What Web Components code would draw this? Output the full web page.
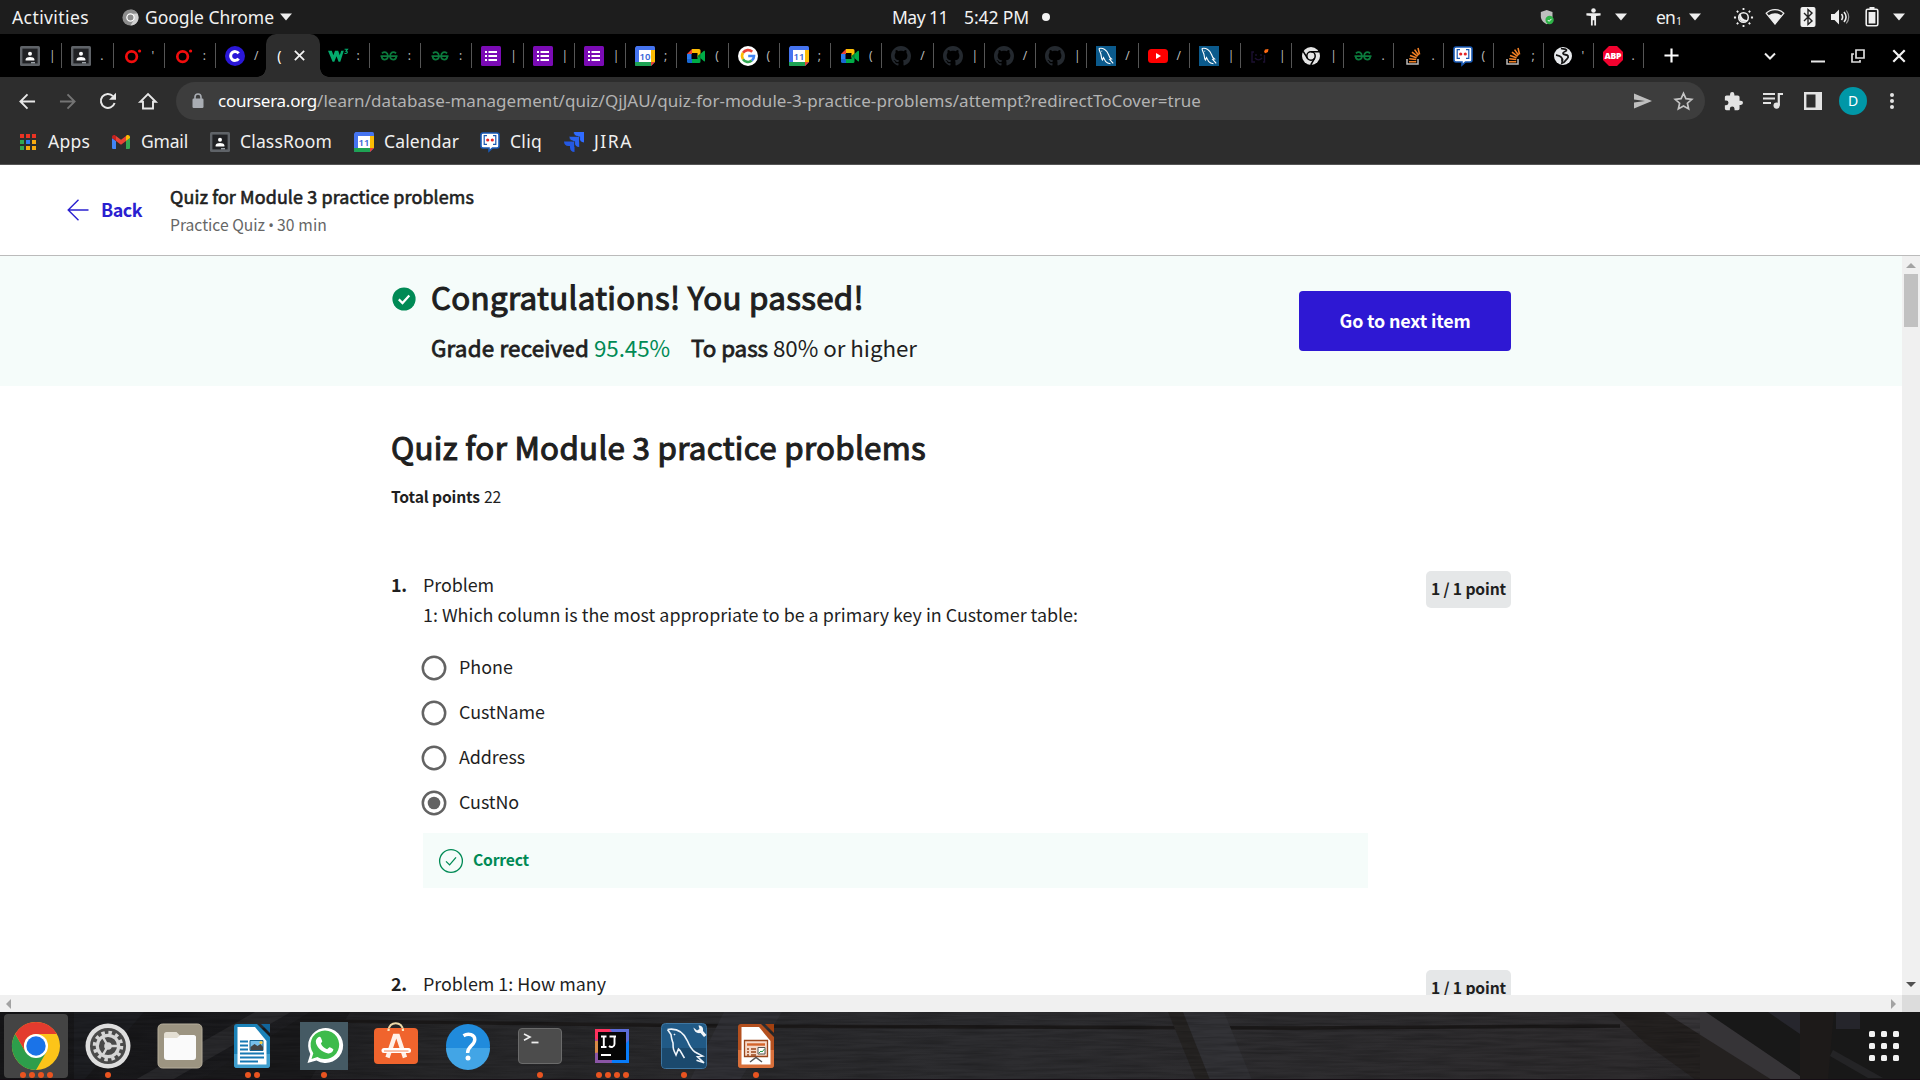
<!DOCTYPE html>
<html lang="en">
<head>
<meta charset="utf-8">
<title>Quiz for Module 3 practice problems</title>
<style>
html,body{margin:0;padding:0;width:1920px;height:1080px;overflow:hidden;background:#000}
</style>
</head>
<body>
<desktop-shell></desktop-shell>
<script>
const ICONS = {
  person:['0 0 20 20','<rect width="20" height="20" rx="1.5" fill="#5f6368"/><rect x="2.4" y="2.6" width="15.2" height="14.8" fill="#202124"/><circle cx="10" cy="7.8" r="2" fill="#fff"/><path d="M5.6 14.4v-1c0-1.6 2.4-2.4 4.4-2.4s4.4.8 4.4 2.4v1z" fill="#fff"/><path d="M11 16h4v1.4h-4z" fill="#9aa0a6"/>'],
  odot:['0 0 20 20','<circle cx="8.6" cy="10.600" r="5.300" fill="none" stroke="#f20d0d" stroke-width="2.700"/><circle cx="16.600" cy="5" r="1.600" fill="#f20d0d"/>'],
  coursera:['0 0 20 20','<circle cx="10" cy="10" r="10" fill="#2a17d8"/><path d="M13.6 7.4A4.4 4.4 0 1 0 13.6 12.6" fill="none" stroke="#fff" stroke-width="3"/>'],
  w3:['0 0 20 20','<path d="M0 4.800h3.800l1.600 4.500L7 4.800h3.200l1.600 4.500 1.400-4.500h2.600L12.300 15.800h-1.700L8.500 10.300 6.300 15.800H4.600z" fill="#04aa6d"/><path d="M16.600 3.200h2.900l-1.500 1.900c2.100 0 1.900 3-1.500 2.300" fill="none" stroke="#04aa6d" stroke-width="1.100"/>'],
  gfg:['0 0 20 20','<path d="M1.500 10.200h17M2.900 7.300C5.500 5 8.900 6.200 8.900 10.200c0 4.200-5.900 4.700-6.300.2M17.100 7.300C14.500 5 11.100 6.200 11.100 10.200c0 4.200 5.900 4.700 6.300.2" fill="none" stroke="#0b7a3c" stroke-width="1.700"/>'],
  forms:['0 0 20 20','<rect width="20" height="20" rx="1.500" fill="#7b0bb5"/><path d="M4 5h2v2H4zM4 9h2v2H4zM4 13h2v2H4zM7.500 5H16v2H7.500zM7.500 9H16v2H7.500zM7.500 13H16v2H7.500z" fill="#fff"/>'],
  cal10:['0 0 20 20','<path d="M1.500 0h17A1.500 1.500 0 0 1 20 1.500V16l-4 4H1.500A1.500 1.500 0 0 1 0 18.500v-17z" fill="#4574f0"/><path d="M16 4h4v12h-4z" fill="#fbbc04"/><path d="M0 16h16v4H1.500A1.500 1.500 0 0 1 0 18.500z" fill="#1ea354"/><path d="M16 16h4l-4 4z" fill="#ea4335"/><path d="M4 4h12v12H4z" fill="#fff"/><text x="10" y="13.500" text-anchor="middle" font-family="Noto Sans" font-weight="600" font-size="9.500" fill="#3a67d8">10</text>'],
  meet:['0 0 20 20','<path d="M6 3L1 8h5z" fill="#ea4335"/><path d="M1 8h4.500v5H1z" fill="#2a7bf0"/><path d="M1 13h5v4H2.500A1.500 1.500 0 0 1 1 15.500z" fill="#1967d2"/><path d="M6 3h7a1.500 1.500 0 0 1 1.500 1.500V10l-3 1.500V7H6z" fill="#fbbc04"/><path d="M6 13h5.500v-2.500l3-2V15.500A1.500 1.500 0 0 1 13 17H6z" fill="#00ac47"/><path d="M14 8.200l4-3.400c.5-.4 1 0 1 .4v9.600c0 .5-.5.8-1 .4l-4-3.400z" fill="#00ac47"/><path d="M11.500 10L14.500 7.500v5z" fill="#00832d"/>'],
  google:['0 0 20 20','<circle cx="10" cy="10" r="10" fill="#fff"/><g fill="none" stroke-width="2.600"><path d="M5 6.800A6 6 0 0 1 14.200 5.800" stroke="#ea4335"/><path d="M5 13.200A6 6 0 0 1 5 6.800" stroke="#fbbc05"/><path d="M13.800 14.600A6 6 0 0 1 5 13.200" stroke="#34a853"/><path d="M10.200 10h5.800a6 6 0 0 1-2.200 4.600" stroke="#4285f4"/></g>'],
  github:['0 0 16 16','<path fill="#24292f" d="M8 0C3.580 0 0 3.580 0 8c0 3.540 2.290 6.530 5.470 7.590.4.070.55-.17.55-.38 0-.19-.01-.82-.01-1.490-2.010.37-2.530-.49-2.690-.94-.09-.23-.48-.94-.82-1.130-.28-.15-.68-.52-.01-.53.630-.01 1.080.58 1.230.82.720 1.210 1.870.87 2.330.66.070-.52.280-.87.510-1.070-1.780-.2-3.640-.89-3.640-3.950 0-.87.310-1.590.82-2.150-.08-.2-.36-1.020.08-2.120 0 0 .67-.21 2.200.82.640-.18 1.320-.27 2-.27s1.360.09 2 .27c1.530-1.040 2.200-.82 2.200-.82.440 1.100.160 1.920.08 2.120.510.56.82 1.270.82 2.150 0 3.070-1.870 3.750-3.650 3.950.29.250.54.730.54 1.480 0 1.070-.01 1.930-.01 2.200 0 .21.150.46.55.38A8.010 8.010 0 0 0 16 8c0-4.420-3.580-8-8-8z"/>'],
  mysql:['0 0 20 20','<rect width="20" height="20" fill="#0b5a8c"/><path d="M3 2.500c4-1 8 1.500 9.500 6 .6 2 1 3.200 3 4.500l-1.800.3 3.500 4M3 2.500c.2 2.500 1.500 4 2 6 .3 2.500.5 4.500 1.500 5.500l1-2.500 2 3.800c1.500 1.700 3 2.200 5 2.500M5.500 4.800l.6.6" fill="none" stroke="#fff" stroke-width="1.100"/>'],
  youtube:['0 0 20 20','<rect y="3" width="20" height="14" rx="3.500" fill="#f00"/><path d="M8 7l5 3-5 3z" fill="#fff"/>'],
  face:['0 0 20 20','<path d="M4 6H2v10h3M13 16h1.500V9M6 8v2M11 8v2M5 12c2 2.500 5 2.500 7 0" fill="none" stroke="#1c1032" stroke-width="1.400"/><path d="M14 6l1-2.500L18.500 3l-.6 3-2.500 1.200z" fill="#ff6a13"/>'],
  chromeMono:['0 0 20 20','<circle cx="10" cy="10" r="9" fill="#e4e4e4"/><circle cx="10" cy="10" r="4.200" fill="none" stroke="#000" stroke-width="1.500"/><path d="M10 5.800h8.200M6.300 12.200L2.200 5.400M13.700 12.200L9.700 19" stroke="#000" stroke-width="1.500"/>'],
  chromeGrey:['0 0 20 20','<circle cx="10" cy="10" r="9.500" fill="#8c8c8c"/><path d="M10 .5a9.500 9.500 0 0 1 8.200 4.800H10z" fill="#8c8c8c"/><path d="M18.200 5.300A9.500 9.500 0 0 1 10 19.500l4-7-1-7z" fill="#d0d0d0"/><circle cx="10" cy="10" r="4.300" fill="#8a8a8a" stroke="#fff" stroke-width="1.500"/>'],
  so:['0 0 20 20','<path d="M4 13v5h11v-5" fill="none" stroke="#bcbbbb" stroke-width="1.500"/><path d="M6 15.700h7.200M6.200 12.700l7 .8M7 9.500l6.600 2.200M9 6.200l5.600 4.200M11.600 3.600l4 5.600M15 2l1.600 6.400" stroke="#f48024" stroke-width="1.600"/>'],
  cliq:['0 0 20 20','<path d="M3 1h14a2 2 0 0 1 2 2v11a2 2 0 0 1-2 2h-4.500L9 19v-3H3a2 2 0 0 1-2-2V3a2 2 0 0 1 2-2z" fill="#fff" stroke="#1859b5" stroke-width="1.600"/><path d="M7 3.700H4.200v8.600H7M13 3.700h2.800v8.600H13" fill="none" stroke="#1859b5" stroke-width="1.200"/><circle cx="7.700" cy="8" r="1.600" fill="#e42527"/><circle cx="12.300" cy="8" r="1.600" fill="#e42527"/>'],
  globe:['0 0 20 20','<circle cx="10" cy="10" r="9" fill="#e8eaed"/><path d="M8 2.500c2 .5 5 0 5.500 1.500s-4 1.500-3.500 3.500 4 .5 5 2.500-1 2.500-2 4-2.500 3-4 3.200c.5-2 .5-3.200-.5-4" fill="none" stroke="#151515" stroke-width="1.800"/><path d="M3 9c2 .300 4 .500 5 2s2 2 1.500 3.500" fill="none" stroke="#151515" stroke-width="1.800"/>'],
  abp:['0 0 20 20','<path d="M6 0h8l6 6v8l-6 6H6l-6-6V6z" fill="#f2022f"/><text x="10" y="13.300" text-anchor="middle" font-family="Open Sans" font-weight="800" font-size="8.600" textLength="17" fill="#fff">ABP</text>'],
  close:['0 0 14 14','<path d="M2 2l10 10M12 2L2 12" stroke="#f2f2f2" stroke-width="1.900"/>'],
  plus:['0 0 16 16','<path d="M8 .5v15M.5 8h15" stroke="#fff" stroke-width="2.300"/>'],
  chevron:['0 0 12 12','<path d="M1 3.500l5 5 5-5" fill="none" stroke="#eee" stroke-width="2"/>'],
  min:['0 0 14 14','<path d="M0 12.500h14" stroke="#e8e8e8" stroke-width="2"/>'],
  restore:['0 0 14 14','<path d="M5 1h8v8H5zM3 5H1v8h8v-2" fill="none" stroke="#ddd" stroke-width="1.700"/>'],
  back:['0 0 18 18','<path d="M17 9H2M9 1.500L1.500 9 9 16.500" fill="none" stroke="currentColor" stroke-width="2"/>'],
  reload:['0 0 18 18','<path d="M15.600 11A7 7 0 1 1 14 4.100" fill="none" stroke="#e8e8e8" stroke-width="2"/><path d="M17 .8v7h-7z" fill="#e8e8e8"/>'],
  home:['0 0 18 18','<path d="M1.200 9.800L9 2l7.800 7.800H14V16.500H4V9.800z" fill="none" stroke="#e8e8e8" stroke-width="1.900"/>'],
  lock:['0 0 12 16','<rect x=".5" y="5.500" width="11" height="9.500" rx="1.200" fill="#a9adb3"/><path d="M3 6V4a3 3 0 0 1 6 0v2" fill="none" stroke="#a9adb3" stroke-width="1.600"/>'],
  send:['0 0 18 16','<path d="M0 .5L18 8 0 15.500V9.500L11 8 0 6.500z" fill="#bfbfbf"/>'],
  star:['0 0 20 20','<path d="M10 2.200l2.300 5.100 5.600.6-4.200 3.700 1.200 5.500L10 14.300l-4.900 2.800 1.200-5.500L2.100 7.900l5.600-.6z" fill="none" stroke="#c4c4c4" stroke-width="1.600"/>'],
  puzzle:['1 1 22 22','<path fill="#e3e3e3" d="M20.500 11H19V7c0-1.100-.9-2-2-2h-4V3.500a2.500 2.500 0 0 0-5 0V5H4c-1.100 0-1.990.9-1.990 2v3.800H3.500a2.700 2.700 0 0 1 0 5.400H2V20c0 1.100.9 2 2 2h3.800v-1.500a2.700 2.700 0 0 1 5.400 0V22H17c1.100 0 2-.9 2-2v-4h1.500a2.500 2.500 0 0 0 0-5z"/>'],
  music:['0 0 20 20','<path d="M0 3h12M0 7.500h12M0 12h8" stroke="#e3e3e3" stroke-width="2"/><path d="M15.800 14.500V3H20" fill="none" stroke="#e3e3e3" stroke-width="2.200"/><circle cx="13.600" cy="14.600" r="3.100" fill="#e3e3e3"/>'],
  panel:['0 0 18 18','<path d="M1.200 1.200h15.600v15.600H1.200z" fill="none" stroke="#e3e3e3" stroke-width="2.400"/><path d="M11.500 1h6v16h-6z" fill="#e3e3e3"/>'],
  dots:['0 0 6 18','<g fill="#e3e3e3"><circle cx="3" cy="3" r="2"/><circle cx="3" cy="9" r="2"/><circle cx="3" cy="15" r="2"/></g>'],
  apps:['0 0 16 16','<path d="M0 0h4v4H0zM6 0h4v4H6zM12 0h4v4h-4z" fill="#ea3323"/><path d="M0 6h4v4H0z" fill="#33a852"/><path d="M6 6h4v4H6z" fill="#2f7bf0"/><path d="M12 6h4v4h-4zM12 12h4v4h-4zM6 12h4v4H6z" fill="#f9ab10"/><path d="M0 12h4v4H0z" fill="#33a852"/>'],
  gmail:['0 0 18 14','<path d="M0 3v9.700C0 13.500.600 14 1.300 14H4V6z" fill="#4285f4"/><path d="M14 6v8h2.700c.700 0 1.300-.5 1.300-1.300V3z" fill="#34a853"/><path d="M14 1.500L18 3v-.800C18 .300 15.900-.600 14.500.400L14 .800V6l4-3z" fill="#fbbc04"/><path d="M4 6V.900L9 4.700 14 .900V6L9 9.800z" fill="#ea4335"/><path d="M0 2.200V3l4 3V.900L3.400.400C1.900-.600 0 .300 0 2.200z" fill="#c5221f"/>'],
  jira:['0 0 20 20','<path d="M9.500 0H20v10.500A4.700 4.700 0 0 1 15.600 6V4.500H14A4.700 4.700 0 0 1 9.500 0z" fill="#2f6bff"/><path d="M5 4.800h10.200v10.200a4.700 4.700 0 0 1-4.500-4.500V9.200H9.400A4.700 4.700 0 0 1 5 4.800z" fill="#2a62f0"/><path d="M0 9.500h10.500V20A4.700 4.700 0 0 1 6 15.500V14H4.500A4.700 4.700 0 0 1 0 9.500z" fill="#2458e2"/><path d="M9.500 0A4.700 4.700 0 0 0 14 4.500M5 4.800a4.700 4.700 0 0 0 4.400 4.400M15.600 4.800v5.500M10.600 9.400v5.500" fill="none" stroke="#2d2d2d" stroke-width=".7"/>'],
  shield:['0 0 18 20','<path d="M8 1l7 2.500v5c0 4.500-3 7.500-7 9.500-4-2-7-5-7-9.500v-5z" fill="#bfbfbf"/><circle cx="11.500" cy="13" r="5" fill="#2eb347"/><path d="M9.300 13l1.600 1.600 2.900-3" fill="none" stroke="#fff" stroke-width="1.200"/>'],
  access:['0 0 18 20','<circle cx="9" cy="3.200" r="2.400" fill="#eee"/><path d="M1.500 6h15v2.300l-4.800.7V19H9.800v-5.500H8.200V19H6.300V9L1.500 8.300z" fill="#eee"/>'],
  tri:['0 0 12 8','<path d="M0 .5h12L6 7.500z" fill="#eee"/>'],
  bright:['0 0 22 22','<circle cx="11" cy="11" r="5" fill="none" stroke="#eee" stroke-width="1.600"/><path d="M8.500 6.500a5 5 0 1 0 7 7A6 6 0 0 1 8.500 6.500z" fill="#eee"/><g stroke="#eee" stroke-width="1.900"><path d="M11 1v2.200M11 21v-2.200M1 11h2.200M21 11h-2.200M4 4l1.500 1.500M18 4l-1.500 1.500M4 18l1.500-1.500M18 18l-1.500-1.500"/></g>'],
  wifi:['0 0 20 18','<path d="M1.200 5.200C6 .3 14 .3 18.800 5.200L10 16z" fill="none" stroke="#eee" stroke-width="1.200"/><path d="M3.500 7.500c4-3 9-3 13 0L10 16.500z" fill="#eee"/>'],
  bt:['0 0 16 20','<rect x=".5" width="15" height="20" rx="2" fill="#f0f0f0"/><path d="M4 6l8 8-4 3.500V2.500L12 6l-8 8" fill="none" stroke="#222" stroke-width="1.400"/>'],
  sound:['0 0 20 18','<path d="M1 6h3.500L9 1.500v15L4.500 12H1z" fill="#eee"/><path d="M11.500 6c1.500 2 1.500 4 0 6M14 4c2.500 3 2.500 7 0 10" fill="none" stroke="#eee" stroke-width="1.600"/><path d="M16.300 2.500c3 4 3 9 0 13" fill="none" stroke="#999" stroke-width="1.200"/>'],
  battery:['0 0 14 20','<path d="M4.500 0h5v2h-5z" fill="#eee"/><rect x="1.200" y="2.200" width="11.600" height="16.600" rx="1.500" fill="none" stroke="#eee" stroke-width="1.600"/><path d="M3.600 5h6.800v11.500H3.600z" fill="#eee"/>'],
  backArrow:['0 0 22 22','<path d="M21.500 11H1.200M11.500.8L1.200 11l10.300 10.200" fill="none" stroke="#2a20d0" stroke-width="1.400"/>'],
  passed:['0 0 24 24','<circle cx="12" cy="12" r="11.600" fill="#008a55"/><path d="M6.800 12.400l3.700 3.700 6.800-7.500" fill="none" stroke="#fff" stroke-width="2.200"/>'],
  correct:['0 0 26 26','<circle cx="13" cy="13" r="11.400" fill="none" stroke="#008a55" stroke-width="1.300"/><path d="M8 13.400l3.600 3.500L18 9.400" fill="none" stroke="#008a55" stroke-width="1.300"/>'],
  radio:['0 0 26 26','<circle cx="13" cy="13" r="11.200" fill="none" stroke="#636363" stroke-width="2.500"/>'],
  radioOn:['0 0 26 26','<circle cx="13" cy="13" r="11.200" fill="none" stroke="#636363" stroke-width="2.500"/><circle cx="13" cy="13" r="6.300" fill="#636363"/>'],
  dChrome:['0 0 48 48','<circle cx="24" cy="24" r="24" fill="#fcc419"/><path d="M3.200 12L13.600 30 24 36 34.400 30 24 48A24 24 0 0 1 3.200 12z" fill="#2d9e4b"/><path d="M3.200 12A24 24 0 0 1 44.800 12H24a12 12 0 0 0-10.400 18z" fill="#e33b2e"/><circle cx="24" cy="24" r="12" fill="#fff"/><circle cx="24" cy="24" r="9.700" fill="#1a73e8"/>'],
  dSettings:['0 0 48 48','<circle cx="24" cy="24" r="22.500" fill="#dedede"/><circle cx="24" cy="24" r="18" fill="#4a4a4a"/><circle cx="24" cy="24" r="13.500" fill="none" stroke="#d6d6d6" stroke-width="3.500" stroke-dasharray="3.500 3.568"/><circle cx="24" cy="24" r="10.700" fill="none" stroke="#d6d6d6" stroke-width="3.200"/><circle cx="24" cy="24" r="3.800" fill="#d6d6d6"/><path d="M24 24h10M24 24l-5-8.700M24 24l-5 8.700" stroke="#d6d6d6" stroke-width="2.400"/>'],
  dFiles:['0 0 48 48','<rect x="2" y="2" width="44" height="44" rx="4.500" fill="#9c9481" stroke="#b5ad9b"/><path d="M8 12.500a2.500 2.500 0 0 1 2.500-2.500h10l3.500 3.500h13.500A2.500 2.500 0 0 1 40 16v19H8z" fill="#e4dfd3"/><path d="M8 16h13l3.500-3h13A2.500 2.500 0 0 1 40 15.500V35a3 3 0 0 1-3 3H11a3 3 0 0 1-3-3z" fill="#fafafa"/>'],
  dWriter:['0 0 48 48','<path d="M9 2h20l13 13v28a3 3 0 0 1-3 3H9a3 3 0 0 1-3-3V5a3 3 0 0 1 3-3z" fill="#1b82b8"/><path d="M6 32h36v11a3 3 0 0 1-3 3H9a3 3 0 0 1-3-3z" fill="#409fce"/><path d="M33 2h9v9z" fill="#11659b"/><path d="M9.500 5H27l11.500 14v23.500h-29z" fill="#fff"/><path d="M12 19.500h8M12 23.500h8M12 27.500h8M12 31.500h24M12 35.500h24M12 39.500h18" stroke="#1779b4" stroke-width="1.900"/><path d="M22 18.500h13v10H22z" fill="#76bde8" stroke="#14628f"/><path d="M22.500 28v-3l4-3 3 2 3-2 2.500 3v3z" fill="#444"/><circle cx="33" cy="20.500" r="1.600" fill="#f8c93a"/>'],
  dWhatsapp:['0 0 48 48','<path d="M0 0h48v48H0z" fill="#455a64"/><path d="M7.500 41l2.800-9A17.500 17.500 0 1 1 16.500 38.500z" fill="#fff"/><path d="M11.500 37l1.800-5.800A14.300 14.300 0 1 1 17.400 35z" fill="#3dbb4b"/><path d="M18 15.500c1-1 2.500-.8 3 .5l1.200 3c.3.800-1 2-1.300 2.500 1.200 2.800 3.300 4.700 6.200 5.800l2.300-2c1 .2 3.300 1.300 4 2-.2 2.700-2.800 4.400-5.200 4.100C21.500 30.500 16 24.500 15.800 19.500c0-1.600 1-3 2.200-4z" fill="#fff"/>'],
  dSoftware:['0 0 48 48','<path d="M16.500 9C16.500-1.500 31-1.500 31 9" fill="none" stroke="#edd9a8" stroke-width="2"/><rect x="2" y="6" width="44" height="36" rx="4" fill="#f0642d"/><path d="M16.500 9c0-1 .1-1.500.3-2.500M31 9c0-1-.1-1.500-.3-2.500" stroke="#fbe8c0" stroke-width="2.200"/><path d="M15.500 35.500L22.800 14h3l7.200 21.500" fill="none" stroke="#fff0e8" stroke-width="4.400"/><path d="M12 28.500h24.500" stroke="#fff" stroke-width="5" stroke-linecap="round"/><path d="M12 29h24.500" stroke="#f0642d" stroke-width=".8"/>'],
  dHelp:['0 0 48 48','<circle cx="24" cy="24" r="22" fill="#208bdc"/><path d="M2 26a22 22 0 0 0 44 0z" fill="#42a5e6"/><path d="M19.500 13.800c5-3.200 11.300-1 11.300 3.700 0 6-7.200 6.200-7.200 13.500" fill="none" stroke="#fff" stroke-width="3.400"/><circle cx="24" cy="36" r="2.500" fill="#fff"/>'],
  dTerminal:['0 0 48 48','<rect x="2.500" y="6.500" width="43" height="35" rx="3.500" fill="#4c4c4c" stroke="#6b6b6b"/><path d="M8 12l6 3-6 3.200" fill="none" stroke="#eee" stroke-width="1.600"/><path d="M15.500 20.500h7" stroke="#eee" stroke-width="1.800"/>'],
  dIntellij:['0 0 48 48','<path d="M7 7h34v34H7z" fill="#c0438c"/><path d="M7 7h15l-2 10H7z" fill="#fe315d"/><path d="M22 7h19v14L30 18z" fill="#5b6bd8"/><path d="M41 18v23H22l10-14z" fill="#087cfa"/><path d="M7 19h8v12H7z" fill="#d98a45"/><path d="M7 31l14-2 3 12H7z" fill="#8a55a5"/><path d="M10 10h28v28H10z" fill="#060606"/><path d="M13 14.500h5.500M13 25h5.500M15.800 14.500V25M21.500 14.500H28M26.500 14.500v7.500c0 3-3.500 3.800-5.500 2" fill="none" stroke="#fff" stroke-width="1.900"/><path d="M13 33h10" stroke="#fff" stroke-width="2"/>'],
  dMysql:['0 0 48 48','<rect x="1.500" y="1.500" width="45" height="45" rx="4" fill="#215a86" stroke="#3e76a1"/><path d="M2 26h44v17a3 3 0 0 1-3 3H5a3 3 0 0 1-3-3z" fill="#1b496d"/><path d="M7.500 7.500c9-1.500 16 2.500 20 11.500 2 5 4 8.500 7.500 11l7.500 4-5 .8 6.500 6-7.500-2.500M7.500 7.500l3.500 5c.5 5 1 5.500 2 8.500 0 6 .5 7 3 12l2.500-6c2.500 1.500 3.500 6 6 9M14 12l1 1" fill="none" stroke="#eef4fa" stroke-width="1.600"/><path d="M33.500 5.500l3.500 3 2.500-1.500-1-3.500c4 0 5 2.500 4.500 5.500l3.500 4-2.500 2-3.500-4c-3.500.8-6.500-1.500-7-5.500z" fill="#f2f6fa"/>'],
  dImpress:['0 0 48 48','<path d="M9 2h20l13 13v28a3 3 0 0 1-3 3H9a3 3 0 0 1-3-3V5a3 3 0 0 1 3-3z" fill="#b4501f"/><path d="M6 28h36v15a3 3 0 0 1-3 3H9a3 3 0 0 1-3-3z" fill="#d9703b"/><path d="M33 2h9v9z" fill="#a3400f"/><path d="M9.500 5H27l11.500 14v23.500h-29z" fill="#fff"/><path d="M12.500 18.500h23v16h-23z" fill="#f6d9c8" stroke="#9a471d" stroke-width="1.300"/><path d="M15 22.500h18" stroke="#d5642b" stroke-width="2.400"/><path d="M15 27h2M15 30h2M15 33h2M19 27h5M19 30h5M19 33h5" stroke="#9a471d" stroke-width="1.700"/><path d="M26 25.500h7v6.500h-7z" fill="#fff" stroke="#555"/><path d="M27 31l2-2 1 1 2.500-3" fill="none" stroke="#2c9a46"/><path d="M18 40l6-4.500 6 4.500" fill="none" stroke="#555" stroke-width="1.500"/>']
};
ICONS.cal11 = [ICONS.cal10[0], ICONS.cal10[1].replace('>10<', '>11<')];

const def = (name, render) => customElements.define(name, class extends HTMLElement {
  connectedCallback() {
    if (this.shadowRoot) return;
    this.attachShadow({mode: 'open'}).innerHTML = render(this);
  }
});

/* Text run that tracks its letters so that it fills the width "w". */
customElements.define('fit-text', class extends HTMLElement {
  connectedCallback() {
    if (this.shadowRoot) return;
    const root = this.attachShadow({mode: 'open'});
    root.innerHTML = '<style>:host{display:block;white-space:nowrap;flex:none}:host([semi]){font-weight:400!important;-webkit-text-stroke:.036em currentColor}span{display:inline-block}</style><span><slot></slot></span>';
    const w = +this.getAttribute('w'), s = root.querySelector('span');
    if (!w) return;
    const nat = s.getBoundingClientRect().width;
    s.style.letterSpacing = ((w - nat) / this.textContent.length) + 'px';
    this.style.width = w + 'px';
  }
});

def('ui-icon', e => {
  const [vb, body] = ICONS[e.getAttribute('name')];
  const w = e.getAttribute('w') || 20, h = e.getAttribute('h') || w;
  return `<style>:host{display:block;flex:none;width:${w}px;height:${h}px}svg{display:block;overflow:visible}</style><svg width="${w}" height="${h}" viewBox="${vb}">${body}</svg>`;
});

def('system-bar', () => `<style>
:host{display:flex;height:34px;background:#1d1d1d;color:#f2f2f2;font:17.5px/28px "Noto Sans",sans-serif;position:relative;box-sizing:border-box;padding-left:12px;align-items:center}
.c{display:flex;align-items:center;margin-left:600px}
.dot{width:8px;height:8px;border-radius:50%;background:#f2f2f2;margin-left:13px}
.r{display:flex;align-items:center;margin-left:auto;padding-right:15px}
</style>
<fit-text w="77">Activities</fit-text>
<ui-icon name="chromeGrey" w="17" style="margin-left:33px"></ui-icon>
<fit-text w="129" style="margin-left:6px">Google Chrome</fit-text>
<ui-icon name="tri" w="12" h="8" style="margin-left:6px"></ui-icon>
<div class="c"><fit-text w="56">May 11</fit-text><fit-text w="65" style="margin-left:16px">5:42 PM</fit-text><div class="dot"></div></div>
<div class="r">
<ui-icon name="shield" w="15" h="17"></ui-icon>
<ui-icon name="access" w="17" h="20" style="margin-left:30px"></ui-icon>
<ui-icon name="tri" w="12" h="8" style="margin-left:13px"></ui-icon>
<fit-text w="19" style="margin-left:29px">en</fit-text><span style="font-size:10.500px;margin:7px 0 0 1px;width:5px">1</span>
<ui-icon name="tri" w="12" h="8" style="margin-left:8px"></ui-icon>
<ui-icon name="bright" w="21" style="margin-left:32px"></ui-icon>
<ui-icon name="wifi" w="20" h="18" style="margin-left:11px"></ui-icon>
<ui-icon name="bt" w="16" h="20" style="margin-left:15px"></ui-icon>
<ui-icon name="sound" w="20" h="18" style="margin-left:14px"></ui-icon>
<ui-icon name="battery" w="14" h="20" style="margin-left:15px"></ui-icon>
<ui-icon name="tri" w="12" h="8" style="margin-left:14px"></ui-icon>
</div>`);

def('browser-tab', e => `<style>
:host{display:flex;align-items:center;flex:none;width:51.250px;height:43px;box-sizing:border-box;padding-left:9px;position:relative}
.t{width:6px;margin-left:9px;color:#bbb;font:12px/20px "Noto Sans",sans-serif;white-space:nowrap}
.s{width:1px;height:25px;background:#555;margin-left:auto}
:host([active]){background:#2d2d2d;border-radius:10px 10px 0 0;margin:0 -1px;width:53.250px;padding-left:11px}
:host([active])::before,:host([active])::after{content:"";position:absolute;bottom:0;width:9px;height:9px}
:host([active])::before{left:-9px;background:radial-gradient(circle at 0 0,#000 8.500px,#2d2d2d 9px)}
:host([active])::after{right:-9px;background:radial-gradient(circle at 100% 0,#000 8.500px,#2d2d2d 9px)}
</style>` + (e.hasAttribute('active')
  ? '<div class="t" style="margin:0;color:#fff;font-size:14px">(</div><ui-icon name="close" w="13" style="margin-left:10px"></ui-icon>'
  : `<ui-icon name="${e.getAttribute('icon')}"></ui-icon><div class="t">${e.getAttribute('t')}</div>${e.hasAttribute('last') ? '' : '<div class="s"></div>'}`));

def('tab-strip', () => {
  const tabs = 'person:| person:. odot:\' odot:: coursera:/ ACTIVE w3:: gfg:: gfg:: forms:| forms:| forms:| cal10:; meet:( google:( cal11:; meet:( github:/ github:| github:/ github:| mysql:/ youtube:/ mysql:| face:| chromeMono:| gfg:. so:. cliq:( so:; globe:\' abp:.'.split(' ');
  return `<style>:host{display:flex;height:43px;background:#000;padding-left:11px;align-items:center;overflow:hidden;box-sizing:border-box}
.short{width:50px}</style>` + tabs.map((t, i) => {
    if (t === 'ACTIVE') return '<browser-tab active></browser-tab>';
    const k = t.indexOf(':');
    return `<browser-tab icon="${t.slice(0, k)}" t="${t.slice(k + 1)}" ${i > 25 ? 'class="short"' : ''} ${i === 4 ? 'last' : ''}></browser-tab>`;
  }).join('') + `<ui-icon name="plus" w="15" style="margin-left:20px"></ui-icon>
<ui-icon name="chevron" w="12" style="margin-left:85px"></ui-icon>
<ui-icon name="min" w="14" style="margin-left:35px"></ui-icon>
<ui-icon name="restore" w="14" style="margin-left:26px"></ui-icon>
<ui-icon name="close" w="16" style="margin-left:26px"></ui-icon>`;
});

def('address-row', () => `<style>
:host{display:flex;height:48px;align-items:center;padding:0 0 0 19px;box-sizing:border-box;color:#e8e8e8;font:17px/26px "Noto Sans",sans-serif}
.o{display:flex;align-items:center;height:38px;width:1529px;margin-left:19px;border-radius:19px;background:#3d3d3d;box-sizing:border-box;padding:0 11px 0 16px;flex:none}
.av{width:28px;height:28px;border-radius:50%;background:#0097a7;color:#fff;font:14px/28px "Noto Sans";text-align:center;margin-left:17px}
</style>
<ui-icon name="back" w="17"></ui-icon>
<ui-icon name="back" w="17" style="margin-left:23px;color:#747474;transform:scaleX(-1)"></ui-icon>
<ui-icon name="reload" w="18" style="margin-left:23px"></ui-icon>
<ui-icon name="home" w="18" style="margin-left:22px"></ui-icon>
<div class="o"><ui-icon name="lock" w="12" h="16"></ui-icon>
<fit-text w="99" style="margin-left:14px;color:#fff">coursera.org</fit-text><fit-text w="884" style="color:#b3b3b3">/learn/database-management/quiz/QjJAU/quiz-for-module-3-practice-problems/attempt?redirectToCover=true</fit-text>
<ui-icon name="send" w="18" h="16" style="margin-left:auto"></ui-icon><ui-icon name="star" w="21" style="margin-left:21px"></ui-icon></div>
<ui-icon name="puzzle" w="19" style="margin-left:19px"></ui-icon>
<ui-icon name="music" w="20" style="margin-left:20px"></ui-icon>
<ui-icon name="panel" w="18" style="margin-left:21px"></ui-icon>
<div class="av">D</div>
<ui-icon name="dots" w="6" h="18" style="margin-left:22px"></ui-icon>`);

def('bookmark-item', e => `<style>:host{display:flex;align-items:center;color:#f0f0f0;font:17.500px/26px "Noto Sans",sans-serif;flex:none}</style>
<ui-icon name="${e.getAttribute('icon')}" w="${e.getAttribute('iw')}" h="${e.getAttribute('ih')}"></ui-icon>
<fit-text w="${e.getAttribute('w')}" style="margin-left:${e.getAttribute('gap')}px;padding-bottom:2px">${e.getAttribute('label')}</fit-text>`);

def('browser-chrome', () => `<style>:host{display:block;background:#2d2d2d;height:131px;box-sizing:border-box;border-bottom:1px solid #555}
.b{display:flex;height:36px;align-items:center;padding-left:20px;gap:22px;margin-top:-1px}</style>
<tab-strip></tab-strip><address-row></address-row>
<div class="b">
<bookmark-item icon="apps" iw="16" ih="16" gap="12" w="42" label="Apps"></bookmark-item>
<bookmark-item icon="gmail" iw="18" ih="14" gap="11" w="47" label="Gmail"></bookmark-item>
<bookmark-item icon="person" iw="20" ih="20" gap="10" w="92" label="ClassRoom"></bookmark-item>
<bookmark-item icon="cal11" iw="20" ih="20" gap="10" w="75" label="Calendar"></bookmark-item>
<bookmark-item icon="cliq" iw="20" ih="20" gap="10" w="32" label="Cliq" style="margin-left:-1px"></bookmark-item>
<bookmark-item icon="jira" iw="20" ih="20" gap="10" w="39" label="JIRA"></bookmark-item>
</div>`);

def('quiz-header', () => `<style>:host{display:flex;height:91px;box-sizing:border-box;background:#fff;border-bottom:1px solid #bbb;padding-left:67px;align-items:center}
.b{color:#2a20d0;font-weight:700;font-size:17.900px;margin-left:12px;padding-bottom:3px}
.m{display:flex;flex-direction:column;margin-left:28px;color:#1f1f1f}
.s{display:flex;font-size:15.700px;line-height:28px;color:#666;padding-top:1px;margin-bottom:-1px}
.s i{font:normal 15px/28px "Noto Sans",sans-serif;width:6px;margin:0 3px 0 3px;display:flex;justify-content:center}
</style>
<ui-icon name="backArrow" w="22"></ui-icon><fit-text class="b" w="41">Back</fit-text>
<div class="m"><fit-text semi w="304" style="font:600 17.900px/28px var(--ff)">Quiz for Module 3 practice problems</fit-text>
<div class="s"><fit-text w="95">Practice Quiz</fit-text><i>•</i><fit-text w="50">30 min</fit-text></div></div>`);

def('result-banner', () => `<style>:host{display:flex;height:130px;background:#f5fcfa;box-sizing:border-box;padding:18px 391px 0 391px;justify-content:space-between}
.l{display:flex}.g{display:flex;font-size:22.400px;line-height:34px;margin-top:12px}
.btn{margin-top:17px;width:212px;height:60px;border-radius:4px;background:#2e18d3;color:#fff;font:700 17.900px/58px var(--ff);display:flex;justify-content:center}
</style>
<div class="l"><ui-icon name="passed" w="24" style="margin:12.500px 0 0 .5px"></ui-icon>
<div style="margin:2px 0 0 15.500px"><fit-text semi w="433" style="font:600 31.300px/42px var(--ff)">Congratulations! You passed!</fit-text>
<div class="g"><fit-text semi w="158">Grade received</fit-text><fit-text w="76" style="margin-left:5px;color:#008a55">95.45%</fit-text><fit-text semi w="77" style="margin-left:21px">To pass</fit-text><fit-text w="144" style="margin-left:5px">80% or higher</fit-text></div></div></div>
<div class="btn"><fit-text w="131">Go to next item</fit-text></div>`);

def('quiz-option', e => `<style>:host{display:flex;align-items:center;height:45px;gap:12px;margin-left:-2px}</style>
<ui-icon name="${e.hasAttribute('checked') ? 'radioOn' : 'radio'}" w="26"></ui-icon><fit-text w="${e.getAttribute('w')}" style="line-height:30px;padding-bottom:4px">${e.textContent}</fit-text>`);

def('quiz-question', e => `<style>:host{display:flex;height:399px;font-size:17.900px;line-height:30px}
.n{width:32px;font-weight:700;flex:none}.m{width:945px;flex:none}
.p{margin-left:58px;width:85px;height:37px;margin-top:2px;border-radius:5px;background:#e5e7e8;font:700 15.700px/35px var(--ff);display:flex;justify-content:center}
</style><div class="n"><fit-text w="16">${e.getAttribute('n')}</fit-text></div><div class="m"><slot></slot></div>
<div class="p"><fit-text w="75">1 / 1 point</fit-text></div>`);

def('correct-note', () => `<style>:host{display:flex;align-items:center;height:55px;background:#f5fcfa;padding-left:14.500px;margin-top:8px;color:#008a55;box-sizing:border-box}</style>
<ui-icon name="correct" w="26"></ui-icon><fit-text w="56" style="margin-left:9.500px;font:700 15.700px/26px var(--ff);padding-bottom:2px">Correct</fit-text>`);

def('scroll-bars', () => `<style>:host{display:flex;flex-direction:column;align-items:center;width:18px;height:739px;background:#f0f0f0;flex:none}
.u{border:5px solid transparent;border-top:0;border-bottom:5px solid #a3a3a3;margin-top:7px}
.t{width:14px;height:53px;background:#c1c1c1;margin-top:6px}
.d{border:5px solid transparent;border-bottom:0;border-top:5px solid #505050;margin-top:auto;margin-bottom:8px}</style>
<div class="u"></div><div class="t"></div><div class="d"></div>`);

def('quiz-page', () => `<style>
:host{display:block;height:847px;background:#fff;color:#1f1f1f;--ff:"Noto Sans CJK SC","Noto Sans CJK JP",sans-serif;font:17.900px/30px var(--ff);overflow:hidden}
.row{display:flex;height:739px}
.v{width:1902px;height:739px;overflow:hidden}
.c{padding-left:391px}
.h{display:flex;height:17px;background:#f0f0f0;align-items:center}
.l{border:5px solid transparent;border-left:0;border-right:5px solid #a3a3a3;margin-left:6px}
.r{border:5px solid transparent;border-right:0;border-left:5px solid #a3a3a3;margin-left:auto;margin-right:6px}
.k{width:18px;height:17px;background:#dcdcdc}
</style>
<quiz-header></quiz-header>
<div class="row"><div class="v">
<result-banner></result-banner>
<div class="c">
<fit-text semi w="535" style="font:600 31.300px/42px var(--ff);padding-top:40px">Quiz for Module 3 practice problems</fit-text>
<div style="display:flex;font-size:15.700px;margin-top:14px;line-height:30px"><fit-text w="89" style="font-weight:700">Total points</fit-text><fit-text w="17" style="margin-left:4px">22</fit-text></div>
<div style="height:57px"></div>
<quiz-question n="1."><fit-text w="71">Problem</fit-text><fit-text w="655">1: Which column is the most appropriate to be a primary key in Customer table:</fit-text>
<div style="height:16px"></div>
<quiz-option w="54">Phone</quiz-option><quiz-option w="86">CustName</quiz-option><quiz-option w="66">Address</quiz-option><quiz-option w="60" checked>CustNo</quiz-option>
<correct-note></correct-note></quiz-question>
<quiz-question n="2."><fit-text w="183">Problem 1: How many</fit-text></quiz-question>
</div></div><scroll-bars></scroll-bars></div>
<div class="h"><div class="l"></div><div class="r"></div><div class="k"></div></div>`);

def('dock-item', e => `<style>:host{display:flex;flex-direction:column;align-items:center;width:64px;height:64px;border-radius:4px;box-sizing:border-box;padding-top:8px;flex:none}
:host([active]){background:#444}
.d{display:flex;gap:3px;margin-top:2px}.d i{width:6px;height:6px;border-radius:50%;background:#e95420}</style>
<ui-icon name="${e.getAttribute('icon')}" w="48"></ui-icon><div class="d">${'<i></i>'.repeat(+e.getAttribute('n'))}</div>`);

def('app-dock', () => `<style>:host{display:block;height:68px;position:relative;background:#202022;overflow:hidden}
.bg{position:absolute;inset:0}
.f{position:relative;display:flex;gap:8px;padding:2px 21px 0 4px;align-items:flex-start}
.g{margin:17px 0 0 auto;display:grid;grid-template-columns:repeat(3,6px);gap:6px}.g i{width:6px;height:6px;border-radius:1.500px;background:#f2f2f2}</style>
<svg class="bg" width="1920" height="68"><defs><linearGradient id="w"><stop offset="0" stop-color="#161618"/><stop offset=".14" stop-color="#1c1c1f"/><stop offset=".22" stop-color="#272729"/><stop offset=".5" stop-color="#2d2d30"/><stop offset=".85" stop-color="#2e2c2e"/><stop offset="1" stop-color="#1a1a1c"/></linearGradient>
<filter id="grain" x="0" y="0" width="100%" height="100%"><feTurbulence type="fractalNoise" baseFrequency=".02 .35" numOctaves="3" seed="4"/><feColorMatrix values="0 0 0 0 0  0 0 0 0 0  0 0 0 0 0  1.200 0 0 0 -.42"/></filter></defs>
<rect width="1920" height="68" fill="url(#w)"/>
<path d="M74 0h70L84 68H74z" fill="#1d1e22"/><path d="M135 68L255 0h36L172 68z" fill="#29292c"/><path d="M200 68L310 0h40l-40 68z" fill="#1a1a1c"/>
<path d="M330 9L720 14 1300 16 1620 14" fill="none" stroke="#1b1919" stroke-width="3.500"/>
<path d="M690 68L724 0h58l-42 68z" fill="#303035"/>
<path d="M1168 0h16l30 68h-18z" fill="#262423"/><path d="M1183 0h41l28 68h-42z" fill="#323236"/>
<path d="M1612 0h58l112 68h-86l-50-36z" fill="#242120"/><path d="M1664 0h42l100 68h-34z" fill="#363437"/>
<path d="M1706 0h214v68h-114z" fill="#181818"/><path d="M1768 0h32v22z" fill="#26262d"/><path d="M1836 0h24v17h-24z" fill="#25252b"/><path d="M1800 0h34l-6 68h-28z" fill="#1d1a19"/><path d="M1833 38l50 28h-15l-38-22z" fill="#242426"/>
<rect width="1700" height="68" filter="url(#grain)" opacity=".35"/>
<rect y="67" width="1920" height="1" fill="#150d14"/></svg>
<div class="f">
<dock-item icon="dChrome" n="4" active></dock-item><dock-item icon="dSettings" n="1"></dock-item><dock-item icon="dFiles" n="0"></dock-item><dock-item icon="dWriter" n="2"></dock-item><dock-item icon="dWhatsapp" n="1"></dock-item><dock-item icon="dSoftware" n="0"></dock-item><dock-item icon="dHelp" n="0"></dock-item><dock-item icon="dTerminal" n="1"></dock-item><dock-item icon="dIntellij" n="4"></dock-item><dock-item icon="dMysql" n="1"></dock-item><dock-item icon="dImpress" n="1"></dock-item>
<div class="g">${'<i></i>'.repeat(9)}</div></div>`);

def('desktop-shell', () => `<style>:host{display:flex;flex-direction:column;width:1920px;height:1080px;overflow:hidden}</style>
<system-bar></system-bar><browser-chrome></browser-chrome><quiz-page></quiz-page><app-dock></app-dock>`);
</script>
</body>
</html>
